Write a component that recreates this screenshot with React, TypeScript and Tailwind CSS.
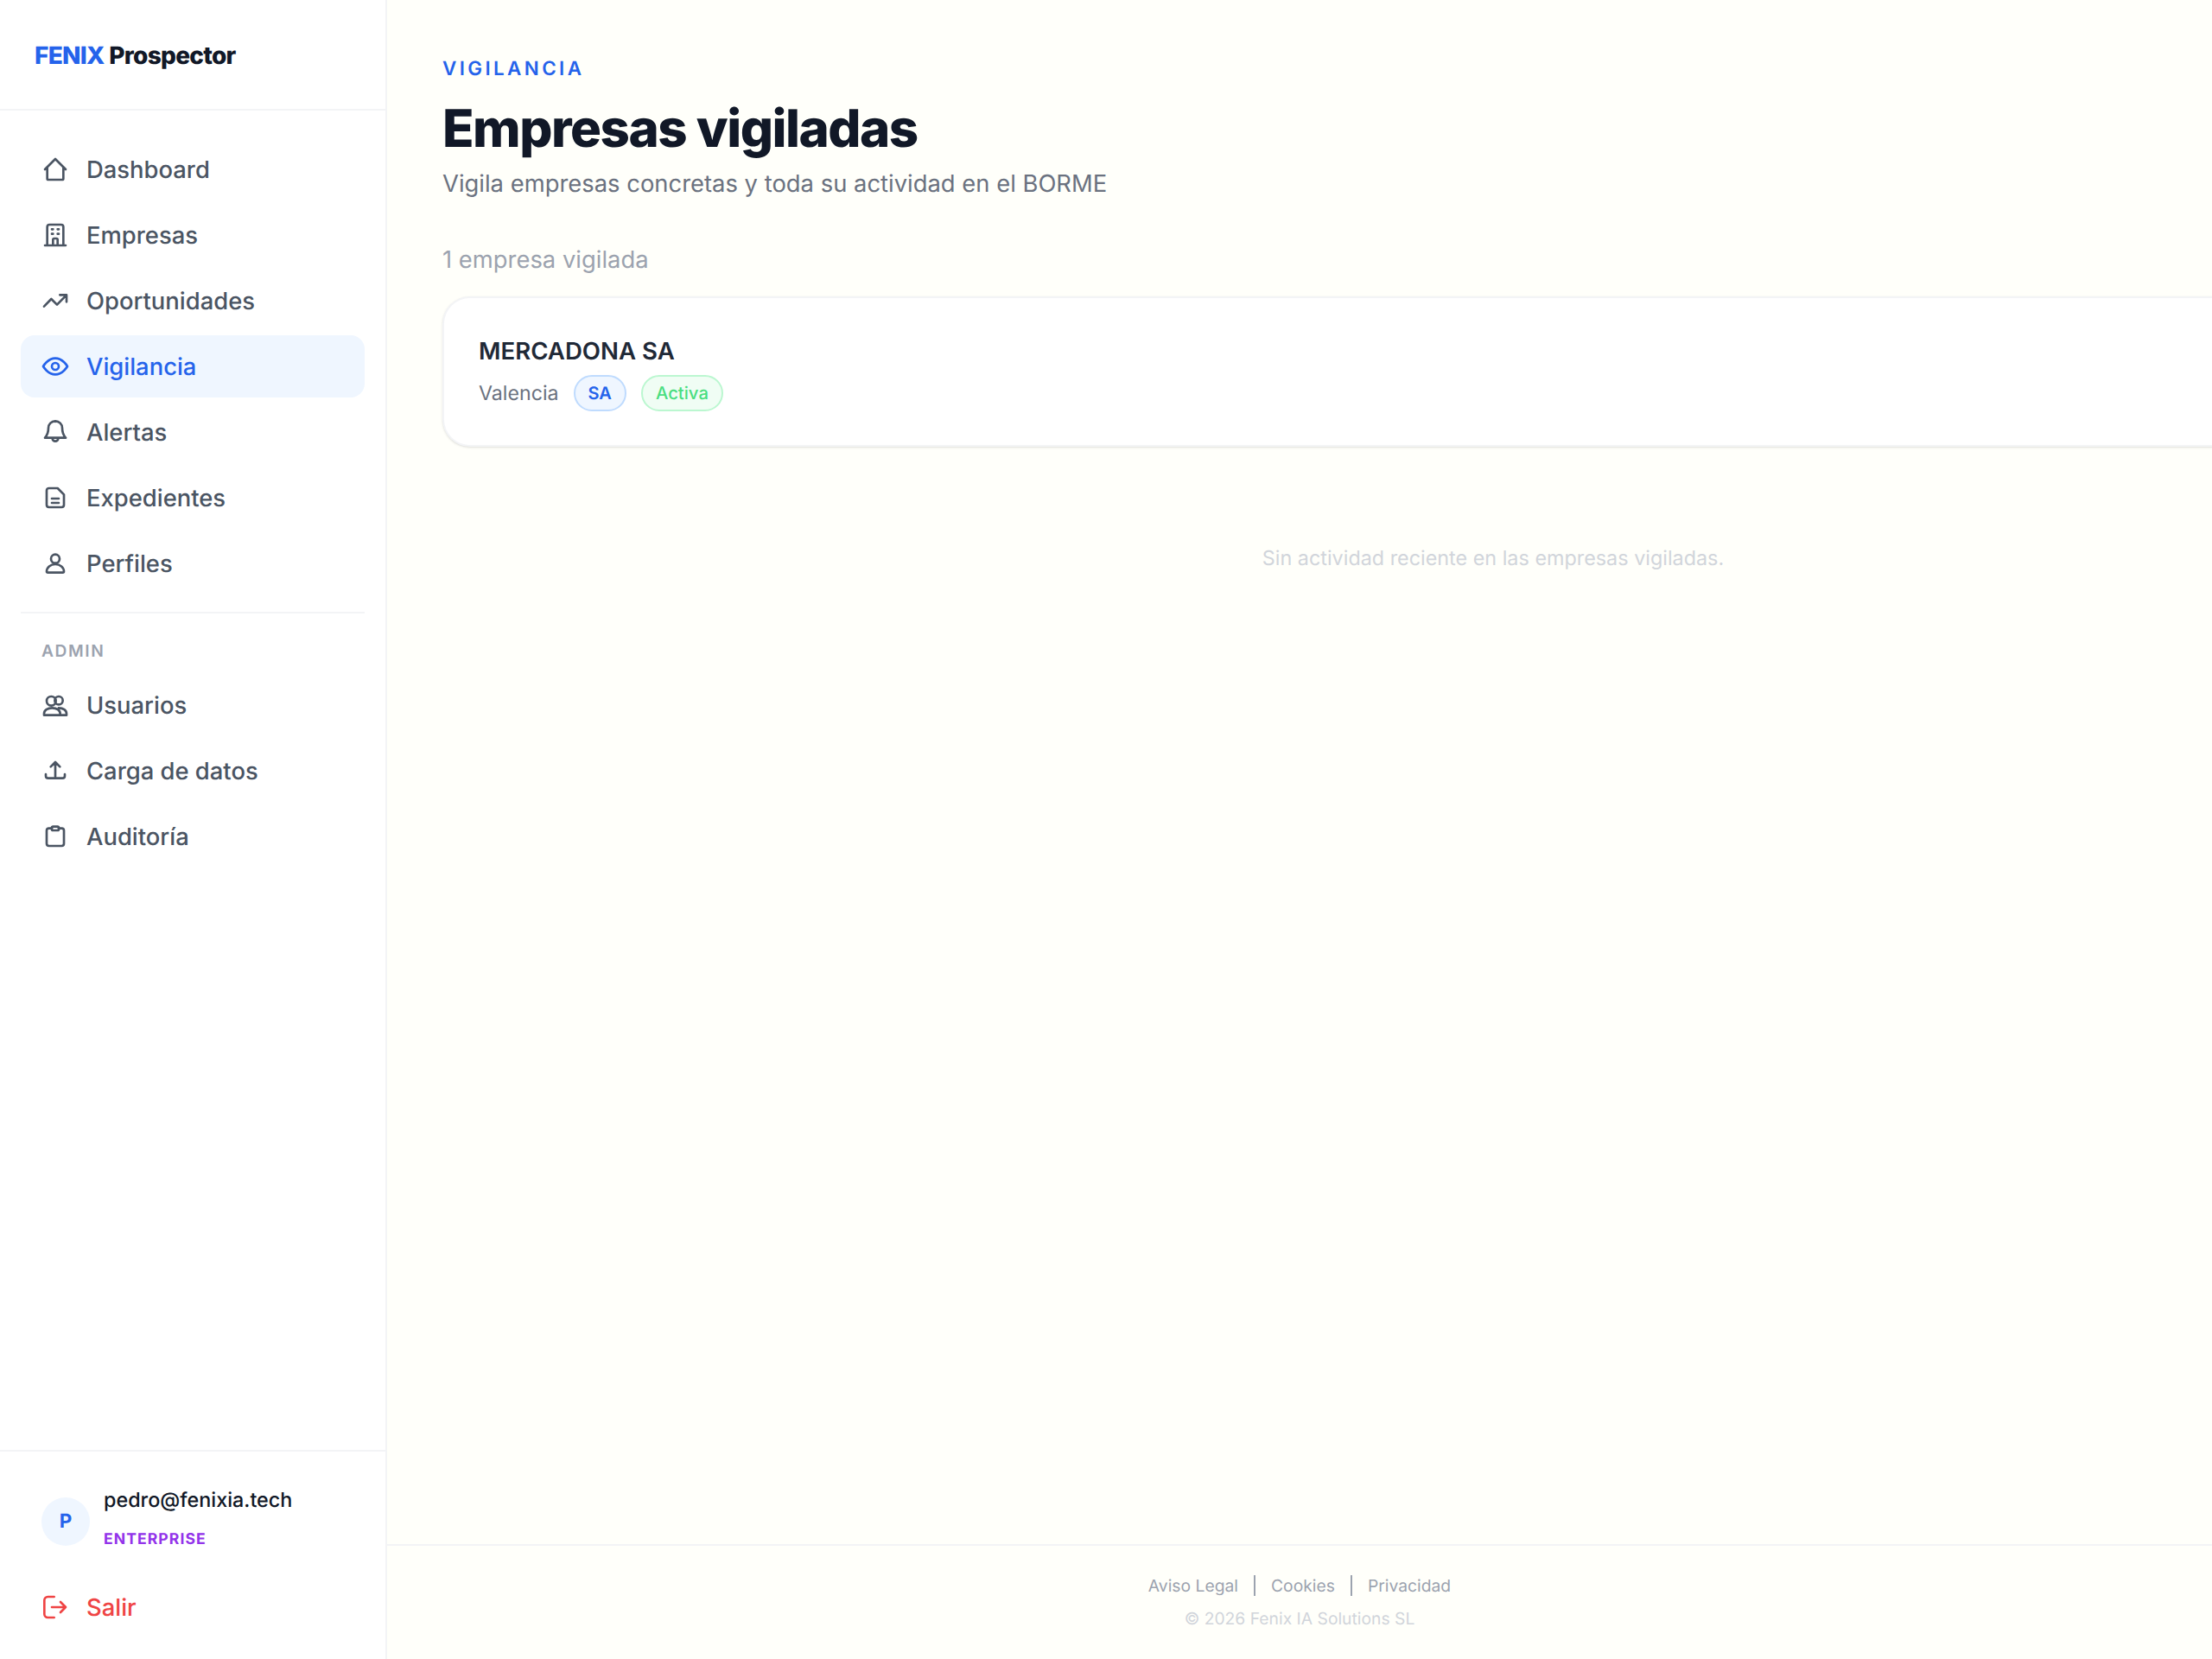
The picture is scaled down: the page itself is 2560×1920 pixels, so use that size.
const icons: Record<string, React.ReactNode> = {
  home: <path d="M3 12l9-9 9 9M5 10v10a1 1 0 0 0 1 1h12a1 1 0 0 0 1-1V10" />,
  building: <path d="M19 21V5a2 2 0 0 0-2-2H7a2 2 0 0 0-2 2v16m14 0h2m-2 0h-5m-9 0H3m2 0h5M9 7h1m-1 4h1m4-4h1m-1 4h1m-5 10v-5a1 1 0 0 1 1-1h2a1 1 0 0 1 1 1v5m-4 0h4" />,
  trend: <path d="M21.75 7l-8.25 8.5-5-5L2.25 17M16 7h5.75v6" />,
  eye: (
    <>
      <path d="M1.5 12S5.5 5 12 5s10.5 7 10.5 7-4 7-10.5 7S1.5 12 1.5 12z" />
      <circle cx="12" cy="12" r="3" />
    </>
  ),
  bell: <path d="M6 8.5a6 6 0 0 1 12 0c0 5 1.6 7 3 8.5H3c1.4-1.5 3-3.5 3-8.5zM12 3v-.5M9.5 17.5a2.5 2.5 0 0 0 5 0" />,
  file: <path d="M14 3.75H6.5a2 2 0 0 0-2 2v12.5a2 2 0 0 0 2 2h11a2 2 0 0 0 2-2V9.25zM9 12.75h6M9 16.5h6" />,
  user: (
    <>
      <circle cx="12" cy="8" r="3.75" />
      <path d="M4.5 19c0-3.5 3.3-6.25 7.5-6.25S19.5 15.5 19.5 19a1 1 0 0 1-1 1h-13a1 1 0 0 1-1-1z" />
    </>
  ),
  users: (
    <>
      <circle cx="8.5" cy="8.5" r="4" />
      <circle cx="15" cy="8" r="3.5" />
      <path d="M2.25 19.5c0-3 3-5 7-5s7 2 7 5v1.25H2.25zM15 14.5c3.8 0 6.75 2 6.75 5v1.25H16" />
    </>
  ),
  upload: <path d="M12 17V4.5M8 8.5l4-4 4 4M3.75 15v1.5a2 2 0 0 0 2 2h12.5a2 2 0 0 0 2-2V15" />,
  clipboard: (
    <>
      <path d="M9 5H6.5a2 2 0 0 0-2 2v11.25a2 2 0 0 0 2 2h11a2 2 0 0 0 2-2V7a2 2 0 0 0-2-2H15" />
      <rect x="9" y="3.5" width="6" height="3.25" rx="1" />
    </>
  ),
  logout: <path d="M11 21H5.5a3 3 0 0 1-3-3V6a3 3 0 0 1 3-3H11M16.5 16.5L21 12l-4.5-4.5M21 12H9" />,
};

function Icon({ name }: { name: string }) {
  return (
    <svg viewBox="0 0 24 24" fill="none" stroke="currentColor" strokeWidth="2" strokeLinecap="round" strokeLinejoin="round" className="h-[32px] w-[32px] shrink-0">
      {icons[name]}
    </svg>
  );
}

const mainNav = [
  { label: "Dashboard", icon: "home" },
  { label: "Empresas", icon: "building" },
  { label: "Oportunidades", icon: "trend" },
  { label: "Vigilancia", icon: "eye", active: true },
  { label: "Alertas", icon: "bell" },
  { label: "Expedientes", icon: "file" },
  { label: "Perfiles", icon: "user" },
];

const adminNav = [
  { label: "Usuarios", icon: "users" },
  { label: "Carga de datos", icon: "upload" },
  { label: "Auditoría", icon: "clipboard" },
];

function NavItem({ label, icon, active }: { label: string; icon: string; active?: boolean }) {
  return (
    <a className={`flex h-[72px] items-center gap-[20px] rounded-[16px] px-[24px] text-[27.4px] font-medium ${active ? "bg-[#eff6ff] text-[#2563eb]" : "text-[#4b5563]"}`}>
      <Icon name={icon} />
      <span className="pt-[1px]">{label}</span>
    </a>
  );
}

export default function App() {
  return (
    <div className="flex h-[1920px] w-[2560px] overflow-hidden bg-[#fffffa] font-['Inter',sans-serif] [text-rendering:geometricPrecision]">
      <aside className="flex w-[448px] shrink-0 flex-col border-r-2 border-[#f3f4f6] bg-white">
        <div className="flex h-[128px] items-center border-b-2 border-[#f3f4f6] px-[40px] pt-[2px] text-[28px] font-extrabold tracking-[-0.7px] text-[#111827]">
          <span className="text-[#2563eb]">FENIX</span>&nbsp;Prospector
        </div>
        <nav className="flex flex-1 flex-col gap-[4px] px-[24px] pt-[32px]">
          {mainNav.map((item) => (
            <NavItem key={item.label} {...item} />
          ))}
          <div className="mt-[16px] mb-[10px] border-t-2 border-[#f3f4f6]" />
          <div className="mb-[8px] flex h-[44px] items-end px-[24px] text-[19.2px] font-semibold tracking-[1.6px] text-[#9ca3af]">ADMIN</div>
          {adminNav.map((item) => (
            <NavItem key={item.label} {...item} />
          ))}
        </nav>
        <div className="border-t-2 border-[#f3f4f6] px-[24px] pt-[38px] pb-[24px]">
          <div className="flex items-center gap-[16px] px-[24px]">
            <div className="mt-[8px] flex h-[56px] w-[56px] items-center justify-center rounded-full bg-[#eff6ff] text-[22.4px] font-bold text-[#2563eb]">P</div>
            <div>
              <div className="text-[23.36px] leading-[36px] font-medium text-[#111827]">pedro@fenixia.tech</div>
              <div className="mt-[15px] text-[17.6px] leading-[26px] font-bold tracking-[1.05px] text-[#9333ea]">ENTERPRISE</div>
            </div>
          </div>
          <a className="mt-[29px] flex h-[72px] items-center gap-[20px] px-[24px] text-[27.4px] font-medium text-[#ef4444]">
            <Icon name="logout" />
            <span className="pt-[1px]">Salir</span>
          </a>
        </div>
      </aside>
      <div className="flex min-w-0 flex-1 flex-col">
        <main className="flex-1 px-[64px] pt-[65px]">
          <div className="w-[2432px]">
            <div className="text-[22.4px] leading-[30px] font-semibold tracking-[3.4px] text-[#2563eb]">VIGILANCIA</div>
            <h1 className="mt-[17px] text-[60px] leading-[74px] font-extrabold tracking-[-1.5px] text-[#111827]">Empresas vigiladas</h1>
            <p className="mt-[5px] text-[27.4px] leading-[42px] text-[#6b7280]">Vigila empresas concretas y toda su actividad en el BORME</p>
            <p className="mt-[46px] text-[27.4px] leading-[42px] text-[#9ca3af]">1 empresa vigilada</p>
            <div className="mt-[22px] h-[174px] rounded-[32px] border-2 border-[#f3f4f6] bg-white px-[40px] pt-[41px] shadow-sm">
              <div className="text-[27.6px] leading-[40px] font-semibold text-[#1f2937]">MERCADONA SA</div>
              <div className="mt-[8px] flex items-center gap-[17px]">
                <span className="text-[23.2px] text-[#6b7280]">Valencia</span>
                <span className="flex h-[42px] items-center rounded-full border-2 border-[#bfdbfe] bg-[#eff6ff] px-[15px] text-[20px] font-semibold text-[#2563eb]">SA</span>
                <span className="flex h-[42px] items-center rounded-full border-2 border-[#bbf7d0] bg-[#f0fdf4] px-[15px] text-[20.3px] font-medium text-[#4ade80]">Activa</span>
              </div>
            </div>
            <p className="mt-[111px] text-center text-[23.36px] text-[#d1d5db]">Sin actividad reciente en las empresas vigiladas.</p>
          </div>
        </main>
        <footer className="flex h-[133px] flex-col items-center border-t-2 border-[#f3f4f6] pt-[32px]">
          <div className="flex items-center gap-[18px] text-[19.3px] text-[#9ca3af]">
            <span>Aviso Legal</span>
            <span className="h-[24px] w-[2px] bg-[#9ca3af]" />
            <span>Cookies</span>
            <span className="h-[24px] w-[2px] bg-[#9ca3af]" />
            <span>Privacidad</span>
          </div>
          <div className="mt-[9px] text-[19.3px] text-[#d1d5db]">© 2026 Fenix IA Solutions SL</div>
        </footer>
      </div>
    </div>
  );
}
